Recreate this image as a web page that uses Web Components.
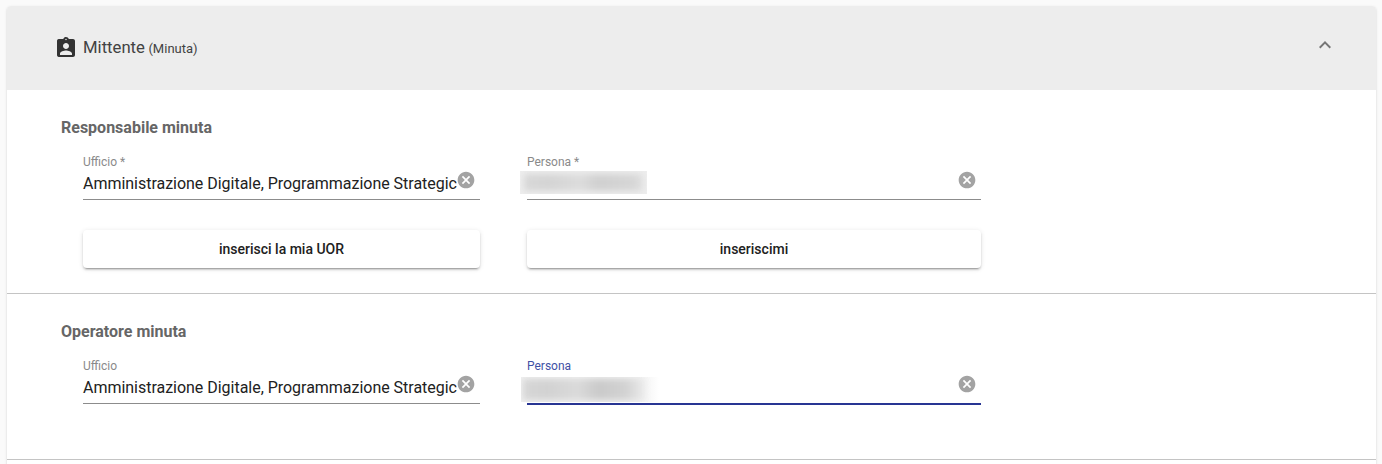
<!DOCTYPE html>
<html lang="it">
<head>
<meta charset="utf-8">
<title>Mittente</title>
<style>
    html, body { margin: 0; height: 464px; overflow: hidden; background: #fafafa; }
    body { font-family: Roboto, "Liberation Sans", sans-serif; padding: 6px 6px 0 7px; box-sizing: border-box; }
</style>
</head>
<body>
<panel-card>
    <span slot="title">Mittente</span>
    <span slot="note">(Minuta)</span>
    <form-section heading="Responsabile minuta" style="--section-height: 204px">
        <text-field label="Ufficio *" value="Amministrazione Digitale, Programmazione Strategic"></text-field>
        <text-field label="Persona *" blur></text-field>
        <flat-button>inserisci la mia UOR</flat-button>
        <flat-button>inseriscimi</flat-button>
    </form-section>
    <form-section heading="Operatore minuta" style="--section-height: 166px">
        <text-field label="Ufficio" value="Amministrazione Digitale, Programmazione Strategic"></text-field>
        <text-field label="Persona" blur focused></text-field>
    </form-section>
</panel-card>

<script>
class PanelCard extends HTMLElement {
    constructor() {
        super();
        this.attachShadow({ mode: 'open' });
        this.shadowRoot.innerHTML = `
            <style>
                :host {
                    display: block;
                    height: 470px;
                    background: #fff;
                    border-radius: 4px;
                    box-shadow: 0 2px 1px -1px rgba(0,0,0,.2), 0 1px 1px 0 rgba(0,0,0,.14), 0 1px 3px 0 rgba(0,0,0,.12);
                }
                header {
                    display: flex;
                    align-items: center;
                    height: 84px;
                    padding: 0 39px 0 47px;
                    background: #ededed;
                    border-radius: 4px 4px 0 0;
                    color: #424242;
                }
                svg.badge { width: 24px; height: 24px; margin: -1px 5px 0 0; fill: #333; flex: none; }
                .title { font-size: 16.7px; margin-top: -2px; }
                .note { font-size: 13px; margin-left: 3.5px; }
                svg.chevron { width: 24px; height: 24px; margin: -6px 0 0 auto; fill: #757575; flex: none; }
            </style>
            <header>
                <svg class="badge" viewBox="0 0 24 24"><path d="M19 3h-4.18C14.4 1.84 13.3 1 12 1c-.2 0-.4.02-.58.06-.58.12-1.1.41-1.5.82-.27.27-.49.6-.64.96-.02.05-.03.1-.05.16H5c-.14 0-.27.01-.4.04-.39.08-.74.28-1.01.55-.18.18-.33.4-.43.64-.1.23-.16.49-.16.77v14c0 .27.06.54.16.78.1.24.25.45.43.64.27.27.62.47 1.01.55.13.02.26.03.4.03h14c1.1 0 2-.9 2-2V5c0-1.1-.9-2-2-2zm-7-.25c.41 0 .75.34.75.75s-.34.75-.75.75-.75-.34-.75-.75.34-.75.75-.75zM12 7c1.66 0 3 1.34 3 3s-1.34 3-3 3-3-1.34-3-3 1.34-3 3-3zm6 12H6v-1.4c0-2 4-3.1 6-3.1s6 1.1 6 3.1V19z"/></svg>
                <span class="title"><slot name="title"></slot></span>
                <span class="note"><slot name="note"></slot></span>
                <svg class="chevron" viewBox="0 0 24 24"><path d="M12 8l-6 6 1.41 1.41L12 10.83l4.59 4.58L18 14z"/></svg>
            </header>
            <slot></slot>
        `;
    }
}

class FormSection extends HTMLElement {
    constructor() {
        super();
        this.attachShadow({ mode: 'open' });
        this.shadowRoot.innerHTML = `
            <style>
                :host {
                    display: block;
                    box-sizing: border-box;
                    height: var(--section-height);
                    padding: 28px 0 0 54px;
                    border-bottom: 1px solid #c4c4c4;
                }
                h3 {
                    margin: 0 0 18px;
                    font-size: 16px;
                    line-height: 19px;
                    font-weight: 700;
                    color: #666;
                }
                .grid {
                    display: grid;
                    grid-template-columns: 397px 454px;
                    column-gap: 47px;
                    row-gap: 30px;
                    margin-left: 22px;
                }
            </style>
            <h3></h3>
            <div class="grid"><slot></slot></div>
        `;
        this.shadowRoot.querySelector('h3').textContent = this.getAttribute('heading');
    }
}

class TextField extends HTMLElement {
    constructor() {
        super();
        this.attachShadow({ mode: 'open' });
        this.shadowRoot.innerHTML = `
            <style>
                :host {
                    display: block;
                    position: relative;
                    height: 45px;
                    box-sizing: border-box;
                    border-bottom: 1px solid #8c8c8c;
                }
                :host([focused]) { border-bottom: 2px solid #283593; height: 46px; }
                label {
                    display: block;
                    font-size: 12px;
                    line-height: 14px;
                    color: #8a8a8a;
                }
                :host([focused]) label { color: #3f51a5; }
                .row { display: flex; align-items: flex-start; height: 30px; }
                .value {
                    flex: 1;
                    min-width: 0;
                    margin-top: 5px;
                    font-size: 16px;
                    line-height: 19px;
                    letter-spacing: -0.025px;
                    color: #212121;
                    white-space: nowrap;
                }
                svg { flex: none; width: 20px; height: 20px; margin: 1px 4px 0 0; fill: #a3a3a3; }
                .smudge {
                    position: absolute;
                    left: -7px;
                    top: 16px;
                    width: 127px;
                    height: 23px;
                    overflow: hidden;
                    background: #eeeeee;
                }
                .smudge::before {
                    content: "";
                    position: absolute;
                    inset: 3px 4px;
                    background: linear-gradient(90deg, #d8d8d8, #d4d4d4 20%, #dcdcdc 48%, #d0d0d0 62%, #d6d6d6 92%, #e0e0e0);
                    filter: blur(3px);
                }
                :host([focused]) .smudge {
                    left: -6px;
                    top: 18px;
                    width: 138px;
                    height: 25px;
                    background: linear-gradient(90deg, #f0f0f0, #f0f0f0 85%, #fff);
                }
                :host([focused]) .smudge::before {
                    inset: 2px 14px 2px 2px;
                    background: linear-gradient(90deg, #d6d6d6, #d2d2d2 20%, #dadada 45%, #cacaca 62%, #d2d2d2 84%, #ececec);
                }
            </style>
            <label></label>
            <div class="row">
                <div class="value"></div>
                <svg viewBox="0 0 24 24"><path d="M12 2C6.47 2 2 6.47 2 12s4.47 10 10 10 10-4.47 10-10S17.53 2 12 2zm5 13.59L15.59 17 12 13.41 8.41 17 7 15.59 10.59 12 7 8.41 8.41 7 12 10.59 15.59 7 17 8.41 13.41 12 17 15.59z"/></svg>
            </div>
        `;
        this.shadowRoot.querySelector('label').textContent = this.getAttribute('label');
        this.shadowRoot.querySelector('.value').textContent = this.getAttribute('value') || '';
        if (this.hasAttribute('blur')) {
            const smudge = document.createElement('div');
            smudge.className = 'smudge';
            this.shadowRoot.appendChild(smudge);
        }
    }
}

class FlatButton extends HTMLElement {
    constructor() {
        super();
        this.attachShadow({ mode: 'open' });
        this.shadowRoot.innerHTML = `
            <style>
                :host {
                    display: flex;
                    align-items: center;
                    justify-content: center;
                    height: 38px;
                    background: #fff;
                    border-radius: 4px;
                    font-size: 14px;
                    font-weight: 500;
                    color: #212121;
                    box-shadow: 0 3px 1px -2px rgba(0,0,0,.2), 0 2px 2px 0 rgba(0,0,0,.14), 0 1px 5px 0 rgba(0,0,0,.12);
                }
            </style>
            <slot></slot>
        `;
    }
}

customElements.define('panel-card', PanelCard);
customElements.define('form-section', FormSection);
customElements.define('text-field', TextField);
customElements.define('flat-button', FlatButton);
</script>
</body>
</html>
